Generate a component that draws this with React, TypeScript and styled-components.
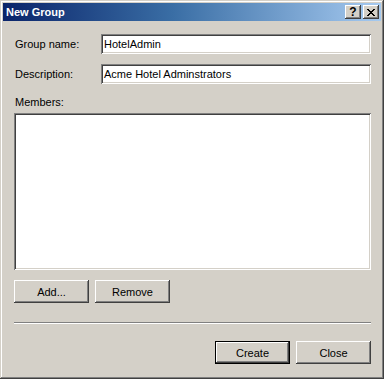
import styled, { createGlobalStyle } from 'styled-components'

const GlobalStyle = createGlobalStyle`
  html, body {
    margin: 0;
    padding: 0;
    background: #D4D0C8;
  }
  * {
    box-sizing: border-box;
  }
`

const CloseGlyph = () => (
  <svg width="8" height="7" viewBox="0 0 8 7" shapeRendering="crispEdges">
    <path
      fill="#000"
      d="M0 0h2v1H0zM6 0h2v1H6zM1 1h2v1H1zM5 1h2v1H5zM2 2h4v1H2zM3 3h2v1H3zM2 4h4v1H2zM1 5h2v1H1zM5 5h2v1H5zM0 6h2v1H0zM6 6h2v1H6z"
    />
  </svg>
)

const App = () => {
  return (
    <>
      <GlobalStyle />
      <Window>
        <TitleBar>
          <Title>New Group</Title>
          <CaptionButtons>
            <CaptionButton>
              <HelpGlyph>?</HelpGlyph>
            </CaptionButton>
            <CaptionButton>
              <CloseGlyph />
            </CaptionButton>
          </CaptionButtons>
        </TitleBar>

        <Body>
          <FieldGrid>
            <Label>Group name:</Label>
            <TextBox>HotelAdmin</TextBox>
            <Label>Description:</Label>
            <TextBox>Acme Hotel Adminstrators</TextBox>
          </FieldGrid>

          <MembersLabel>Members:</MembersLabel>
          <ListBox />

          <ButtonRow>
            <Button>Add...</Button>
            <Button>Remove</Button>
          </ButtonRow>

          <Separator />

          <ButtonRow align="end">
            <Button primary>Create</Button>
            <Button>Close</Button>
          </ButtonRow>
        </Body>
      </Window>
    </>
  )
}

export default App

const Window = styled.div`
  width: 384px;
  height: 379px;
  background: #D4D0C8;
  padding: 3px;
  display: flex;
  flex-direction: column;
  font-family: 'Liberation Sans', Arial, sans-serif;
  font-size: 11px;
  color: #000;
  box-shadow:
    inset -1px -1px #404040,
    inset 1px 1px #D4D0C8,
    inset -2px -2px #808080,
    inset 2px 2px #FFFFFF;
`

const TitleBar = styled.div`
  height: 18px;
  display: flex;
  align-items: center;
  justify-content: space-between;
  padding: 0 2px 0 2px;
  background: linear-gradient(to right, #0A246A 0%, #3A6EA5 45%, #A6CAF0 100%);
`

const Title = styled.span`
  color: #FFFFFF;
  font-weight: 700;
  font-size: 11px;
  letter-spacing: 0;
  padding-left: 1px;
`

const CaptionButtons = styled.div`
  display: flex;
  gap: 2px;
`

const CaptionButton = styled.div`
  width: 16px;
  height: 14px;
  display: flex;
  align-items: center;
  justify-content: center;
  background: #D4D0C8;
  box-shadow:
    inset -1px -1px #404040,
    inset 1px 1px #FFFFFF,
    inset -2px -2px #808080,
    inset 2px 2px #D4D0C8;
`

const HelpGlyph = styled.span`
  font-weight: 700;
  font-size: 12px;
  line-height: 12px;
  margin-top: -1px;
`

const Body = styled.div`
  flex: 1;
  display: flex;
  flex-direction: column;
  padding: 13px 10px 0 11px;
`

const FieldGrid = styled.div`
  display: grid;
  grid-template-columns: 87px 1fr;
  row-gap: 10px;
  align-items: center;
`

const Label = styled.span`
  padding-left: 1px;
`

const TextBox = styled.div`
  height: 20px;
  background: #FFFFFF;
  padding: 3px 3px 0 3px;
  line-height: 14px;
  box-shadow:
    inset 1px 1px #808080,
    inset -1px -1px #FFFFFF,
    inset 2px 2px #404040,
    inset -2px -2px #D4D0C8;
`

const MembersLabel = styled.div`
  margin-top: 12px;
  height: 13px;
  line-height: 13px;
  padding-left: 1px;
`

const ListBox = styled.div`
  margin-top: 4px;
  height: 157px;
  background: #FFFFFF;
  box-shadow:
    inset 1px 1px #808080,
    inset -1px -1px #FFFFFF,
    inset 2px 2px #404040,
    inset -2px -2px #D4D0C8;
`

interface ButtonRowProps {
  align?: 'start' | 'end';
}

const ButtonRow = styled.div<ButtonRowProps>`
  margin-top: ${props => props.align === 'end' ? '17px' : '10px'};
  display: flex;
  gap: 6px;
  justify-content: ${props => props.align === 'end' ? 'flex-end' : 'flex-start'};
`

interface ButtonProps {
  primary?: boolean;
}

const Button = styled.div<ButtonProps>`
  width: 75px;
  height: 23px;
  display: flex;
  align-items: center;
  justify-content: center;
  background: #D4D0C8;
  border: ${props => props.primary ? '1px solid #000' : 'none'};
  box-shadow: ${props => props.primary
    ? 'inset -1px -1px #404040, inset 1px 1px #FFFFFF, inset -2px -2px #808080'
    : 'inset -1px -1px #404040, inset 1px 1px #FFFFFF, inset -2px -2px #808080, inset 2px 2px #D4D0C8'};
`

const Separator = styled.div`
  margin-top: 19px;
  height: 2px;
  border-top: 1px solid #808080;
  border-bottom: 1px solid #FFFFFF;
`
